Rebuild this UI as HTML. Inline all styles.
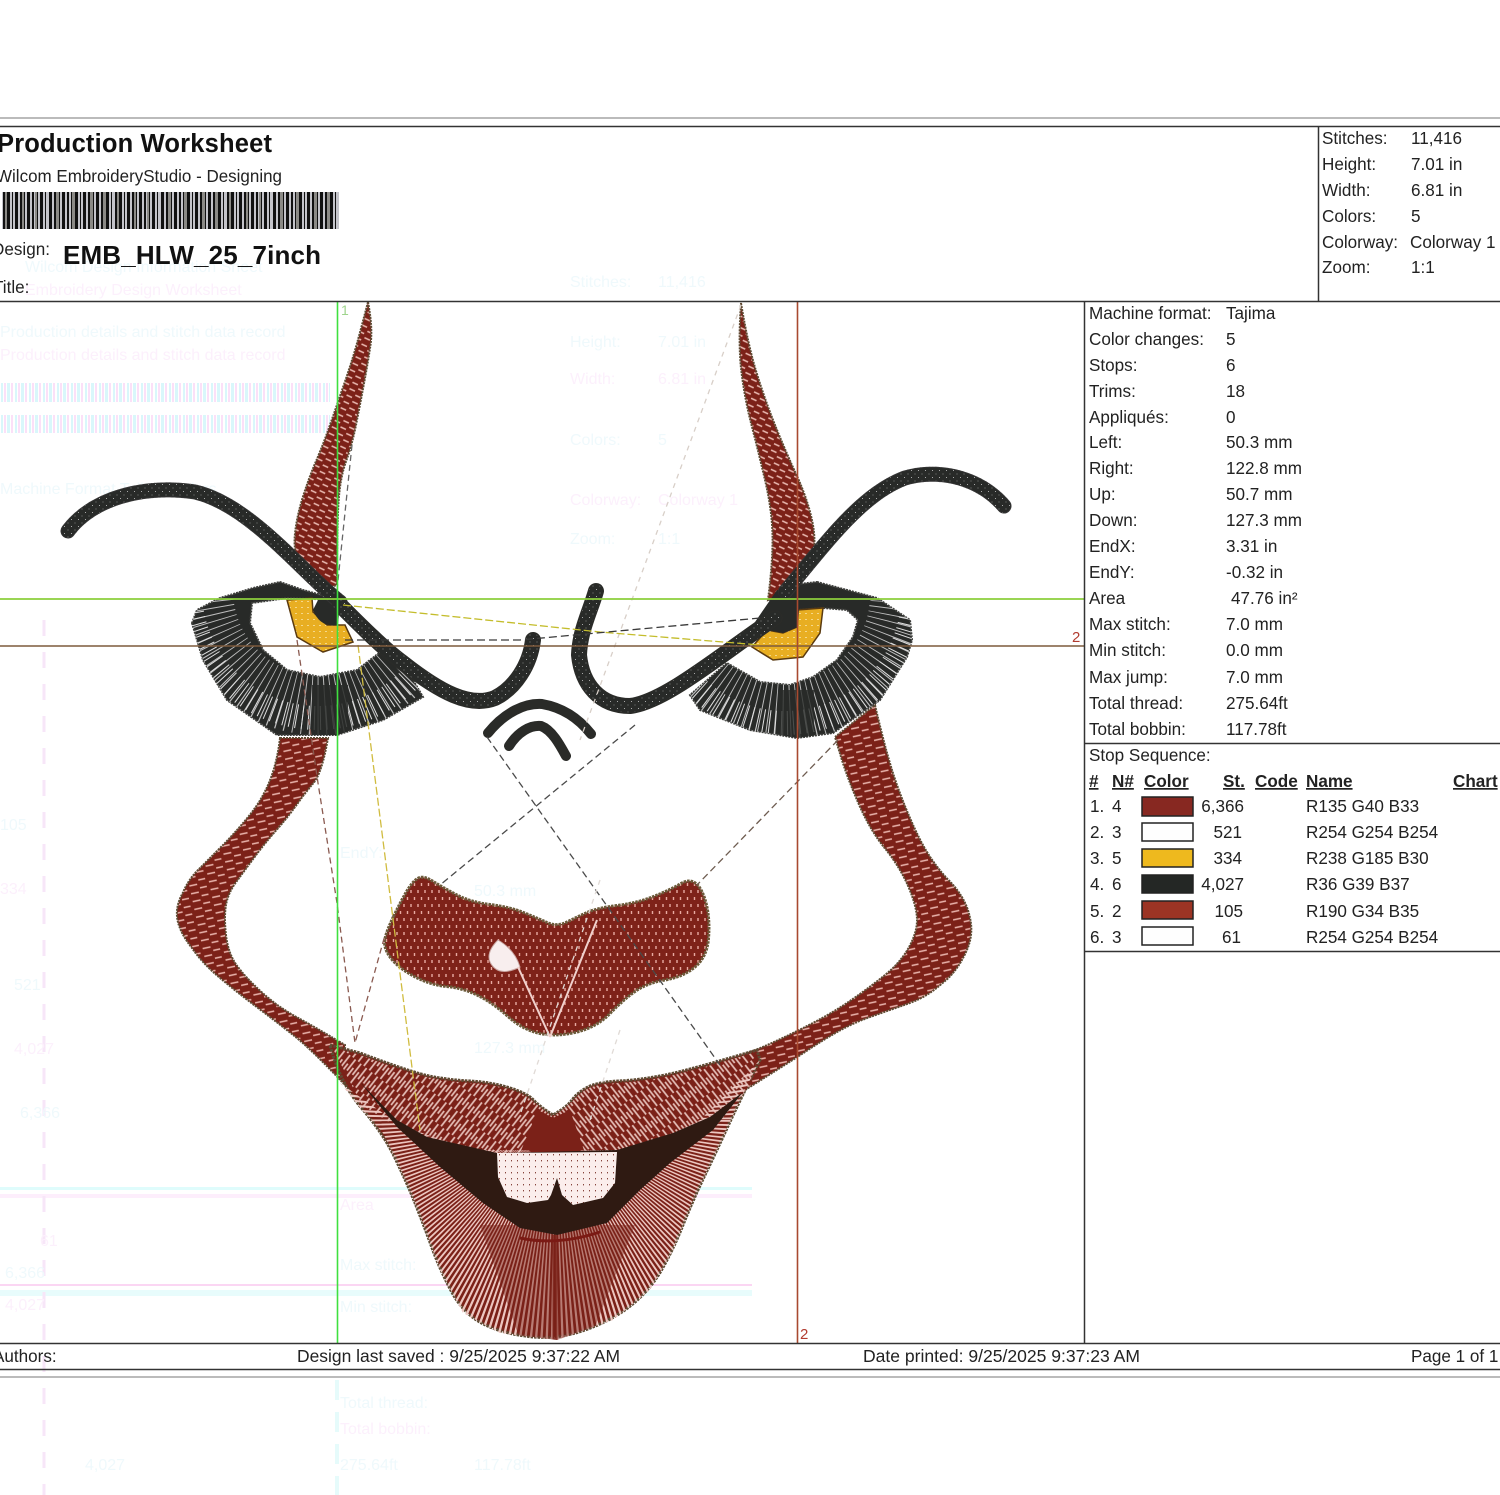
<!DOCTYPE html>
<html lang="en"><head><meta charset="utf-8"><title>Production Worksheet</title>
<style>
html,body{margin:0;padding:0;background:#fff;width:1500px;height:1495px;overflow:hidden}
svg{display:block}
text{font-family:"Liberation Sans",sans-serif;fill:#222}
.t{font-size:17.1px}
.b{font-size:17.1px;font-weight:bold;text-decoration:underline}
.g{font-size:16px;fill:#eff9fc}
.p{font-size:16px;fill:#fcf0fc}
</style></head><body>
<svg width="1500" height="1495" viewBox="0 0 1500 1495" xmlns="http://www.w3.org/2000/svg">
<defs>
<pattern id="bar" patternUnits="userSpaceOnUse" width="112" height="40" x="2" y="190">
<rect width="112" height="40" fill="#c4c4ca"/>
<path d="M1 0h2v40h-2zM5 0h3v40h-3zM10 0h1v40h-1zM13 0h3v40h-3zM18 0h2v40h-2zM22 0h1v40h-1zM25 0h3v40h-3zM30 0h2v40h-2zM35 0h1v40h-1zM38 0h3v40h-3zM43 0h1v40h-1zM47 0h3v40h-3zM52 0h2v40h-2zM57 0h1v40h-1zM60 0h3v40h-3zM65 0h2v40h-2zM69 0h1v40h-1zM73 0h3v40h-3zM78 0h1v40h-1zM81 0h3v40h-3zM86 0h2v40h-2zM91 0h1v40h-1zM94 0h3v40h-3zM99 0h2v40h-2zM104 0h3v40h-3zM109 0h1v40h-1z" fill="#111"/>
<path d="M3 0h2v40h-2zM20 0h2v40h-2zM33 0h2v40h-2zM54 0h3v40h-3zM70 0h3v40h-3zM88 0h3v40h-3zM101 0h3v40h-3z" fill="#8b8a86"/>
</pattern>
<pattern id="ghostbar" patternUnits="userSpaceOnUse" width="14" height="20">
<rect width="14" height="20" fill="#fff"/>
<path d="M1 0h2v20h-2zM7 0h3v20h-3z" fill="#d9f7fb"/>
<path d="M4 0h2v20h-2zM11 0h2v20h-2z" fill="#fbe0f8"/>
</pattern>
<pattern id="red" patternUnits="userSpaceOnUse" width="20" height="8" patternTransform="rotate(-12)">
<rect width="20" height="8" fill="#7c2118"/>
<path d="M1 2h8M11 6h7" stroke="#eab5ad" stroke-width="1.4"/>
</pattern>
<pattern id="redt" patternUnits="userSpaceOnUse" width="16" height="7" patternTransform="rotate(25)">
<rect width="16" height="7" fill="#7c2118"/>
<path d="M1 1.500h6M9 5h6" stroke="#ecbcb4" stroke-width="1.5"/>
</pattern>
<pattern id="nose" patternUnits="userSpaceOnUse" width="7" height="14">
<rect width="7" height="14" fill="#7e2219"/>
<path d="M1.5 1v3M5 8v3" stroke="#e8aaa2" stroke-width="1.4"/>
</pattern>
<pattern id="lipL" patternUnits="userSpaceOnUse" width="7" height="22" patternTransform="rotate(38)">
<rect width="7" height="22" fill="#7b2118"/>
<path d="M1.500 0v14M5 8v14" stroke="#e6c0b9" stroke-width="1.7"/>
</pattern>
<pattern id="lipR" patternUnits="userSpaceOnUse" width="7" height="22" patternTransform="rotate(-38)">
<rect width="7" height="22" fill="#7b2118"/>
<path d="M1.500 0v14M5 8v14" stroke="#e6c0b9" stroke-width="1.7"/>
</pattern>
<pattern id="dots" patternUnits="userSpaceOnUse" width="7" height="7">
<rect width="7" height="7" fill="#282a28"/>
<rect x="1" y="1" width="1" height="1" fill="#a9a9a9"/>
<rect x="4.5" y="4.5" width="1" height="1" fill="#808080"/>
</pattern>
<pattern id="yel" patternUnits="userSpaceOnUse" width="6" height="6">
<rect width="6" height="6" fill="#e8ae22"/>
<rect x="1" y="1" width="2" height="1" fill="#f5d88a"/>
</pattern>
<pattern id="tooth" patternUnits="userSpaceOnUse" width="6" height="6">
<rect width="6" height="6" fill="#fbeeec"/>
<rect x="1" y="2" width="1" height="1.4" fill="#87453d"/>
</pattern>
<clipPath id="cLowerLip"><path d="M340 1083L362 1110L383 1133L407 1183L423 1223L440 1270L463 1313L500 1333L557 1340L613 1320L650 1290L673 1250L693 1200L717 1150L740 1100L760 1060L700 1120L640 1150L555 1150L470 1150L400 1125Z"/></clipPath>
<clipPath id="cEyeL"><path d="M192 623L203 660L227 700L277 735L337 735L383 720L423 697L403 663L383 650L357 670L320 677L287 670L263 650L250 623L252 603L253 588L220 598L197 610Z"/></clipPath>
<clipPath id="cEyeR"><path d="M910 620L912 640L907 657L880 700L833 733L797 738L750 730L700 710L690 695L727 663L760 682L790 685L813 677L837 660L853 637L858 620L847 610L877 598Z"/></clipPath>
</defs>
<rect width="1500" height="1495" fill="#fff"/>

<!-- ghost artefacts -->
<g>
<rect x="0" y="383" width="330" height="19" fill="url(#ghostbar)"/><rect x="0" y="415" width="330" height="18" fill="url(#ghostbar)"/>
<rect x="0" y="1187" width="752" height="3" fill="#dffcfc"/><rect x="0" y="1194" width="752" height="4" fill="#fdeefc"/>
<rect x="0" y="1284" width="752" height="2" fill="#fbd6f3"/><rect x="0" y="1290" width="752" height="6" fill="#e8fcfc"/>
<path d="M44 620V1495" stroke="#f7e6f8" stroke-width="3" stroke-dasharray="16 16"/>
<path d="M337 1380V1495" stroke="#e6fbfb" stroke-width="4" stroke-dasharray="20 12"/>
<text class="g" x="25" y="272">Wilcom Design Information Sheet</text>
<text class="p" x="25" y="295">Embroidery Design Worksheet</text>
<text class="g" x="0" y="337">Production details and stitch data record</text>
<text class="p" x="0" y="360">Production details and stitch data record</text>
<text class="g" x="0" y="494">Machine   Format   Tajima   Colors</text>
<text class="g" x="570" y="287">Stitches:</text><text class="g" x="658" y="287">11,416</text>
<text class="g" x="570" y="347">Height:</text><text class="g" x="658" y="347">7.01 in</text>
<text class="p" x="570" y="384">Width:</text><text class="p" x="658" y="384">6.81 in</text>
<text class="g" x="570" y="445">Colors:</text><text class="g" x="658" y="445">5</text>
<text class="p" x="570" y="505">Colorway:</text><text class="p" x="658" y="505">Colorway 1</text>
<text class="g" x="570" y="544">Zoom:</text><text class="g" x="658" y="544">1:1</text>
<text class="g" x="474" y="896">50.3 mm</text><text class="g" x="474" y="1053">127.3 mm</text>
<text class="g" x="340" y="858">EndY:</text><text class="p" x="340" y="1210">Area</text>
<text class="g" x="340" y="1270">Max stitch:</text><text class="g" x="340" y="1312">Min stitch:</text>
<text class="g" x="340" y="1408">Total thread:</text><text class="p" x="340" y="1434">Total bobbin:</text>
<text class="g" x="340" y="1470">275.64ft</text><text class="g" x="474" y="1470">117.78ft</text>
<text class="g" x="0" y="830">105</text><text class="p" x="0" y="894">334</text><text class="g" x="14" y="990">521</text>
<text class="p" x="14" y="1054">4,027</text><text class="g" x="20" y="1118">6,366</text><text class="p" x="40" y="1246">61</text>
<text class="g" x="5" y="1278">6,366</text><text class="p" x="5" y="1310">4,027</text>
<text class="g" x="85" y="1470">4,027</text>
</g>

<!-- jaws -->
<path d="M280 738Q277 763 269.500 781.500Q262 800 248.500 816.500Q235 833 221.500 846.500Q208 860 198 870Q188 880 182.500 893.500Q175 907 177.500 920Q180 933 192 948Q202 963 220 978Q238 993 258 1008Q278 1023 295 1036.500Q312 1050 345 1085L345 1045Q315 1027 296.500 1017Q278 1007 261.500 992Q245 977 236.500 965Q228 953 226 935Q224 917 226 905Q228 893 236.500 881.500Q245 870 255 856.500Q265 843 276.500 830Q288 817 296.500 805Q305 793 313.500 783Q322 773 328 738Z" fill="url(#red)" stroke="#5e4a33" stroke-width="2" stroke-dasharray="2 1"/>
<path d="M875 705Q887 757 897 785Q907 813 918.500 836.500Q930 860 947 878.500Q966 897 970 918Q974 935 966 952Q957 972 942 983.500Q927 997 908.500 1003.500Q890 1010 871.500 1016.500Q853 1023 838 1031.500Q823 1040 808 1050Q793 1060 745 1090L720 1063Q750 1053 775 1041.500Q800 1030 818.500 1020Q837 1010 853.500 998.500Q870 987 885 975Q900 963 908.500 948Q917 933 917 920Q917 907 908.500 887Q900 867 885 848.500Q870 830 858.500 803.500Q847 777 841 757Q835 737 835 737Z" fill="url(#red)" stroke="#5e4a33" stroke-width="2" stroke-dasharray="2 1"/>

<!-- horns -->
<path d="M368 302Q373 328 370.500 345Q368 362 364 383.500Q360 405 356 425Q352 445 346 461.500Q340 478 338.500 503Q337 528 337 585L327 588Q307 575 300 563.500Q293 552 295 533.500Q297 515 303.500 495Q310 475 316.500 460Q323 445 330.500 423.500Q338 402 345.500 380Q353 358 357.500 341.500Q362 325 368 302Z" fill="url(#redt)" stroke="#5e4a33" stroke-width="2" stroke-dasharray="2 1"/>
<path d="M741 303Q748 345 756.500 372.500Q765 400 775 425Q785 450 796.500 475Q808 500 812.500 522.500Q817 545 811 560Q805 575 790 590L768 600Q773 560 772.500 535Q772 510 765 480Q758 450 751.500 425Q745 400 741.500 372.500Q738 345 741 303Z" fill="url(#redt)" stroke="#5e4a33" stroke-width="2" stroke-dasharray="2 1"/>

<!-- nose -->
<path d="M393.500 916.500Q400 903 406 892.500Q412 882 417.500 878.500Q423 875 432.500 881Q442 887 456 894.500Q470 902 490 904.500Q510 907 523.500 912.500Q537 918 547 922.500Q557 927 567 922Q577 917 587 912.500Q597 908 617 905.500Q637 903 653.500 896.500Q670 890 680 884Q690 878 696.500 884Q703 890 706.500 905Q710 920 708.500 938.500Q707 957 695 967Q683 977 665 980Q647 983 635 991.500Q623 1000 610 1013.500Q597 1027 577 1032Q557 1037 540 1033.500Q523 1030 508 1016.500Q493 1003 478 995.500Q463 988 446.500 986.500Q430 985 413.500 976Q397 967 390 957Q383 947 385 938.500Q387 930 393.500 916.500Z" fill="url(#nose)" stroke="#6b5a3a" stroke-width="3" stroke-dasharray="2.5 1"/>
<path d="M498 940Q486 952 490 962Q498 978 520 967Q515 950 498 940Z" fill="#f8eeee" stroke="#c9a6a2"/>
<path d="M550 1037L597 920M550 1037L518 967" stroke="#f0d0cc" stroke-width="2" fill="none"/>

<!-- mouth -->
<path d="M330 1045L360 1053Q413 1073 431.500 1076.500Q450 1080 470 1081Q490 1082 508.500 1087.500Q527 1093 533.500 1100Q540 1107 553 1115Q567 1107 572 1100Q577 1093 587 1087.500Q597 1082 618.500 1081Q640 1080 665 1075Q690 1070 757 1050L760 1060Q740 1100 728.500 1125Q717 1150 705 1175Q693 1200 683 1225Q673 1250 661.500 1270Q650 1290 631.500 1305Q613 1320 585 1330Q557 1340 528.500 1336.500Q500 1333 481.500 1323Q463 1313 451.500 1291.500Q440 1270 431.500 1246.500Q423 1223 415 1203Q407 1183 395 1158Q383 1133 361.500 1108Q340 1083 330 1045Z" fill="#7b2118" stroke="#5e4a33" stroke-width="3" stroke-dasharray="2.5 1"/>
<path d="M332 1047L360 1055Q413 1075 431.500 1078Q450 1082 470 1083Q490 1084 508.500 1089Q527 1095 533.500 1102L553 1117V1160L497 1153L427 1137L397 1127L362 1105Z" fill="url(#lipL)"/>
<path d="M553 1117L572 1102Q577 1095 587 1089Q597 1084 618.500 1083Q640 1082 665 1077Q690 1072 756 1052L750 1085L717 1125L673 1140L617 1150L553 1160Z" fill="url(#lipR)"/>
<path d="M538 1110L553 1118L570 1110L585 1153L520 1153Z" fill="#7b2118"/>
<g clip-path="url(#cLowerLip)">
<circle cx="555" cy="1120" r="140" fill="none" stroke="#ecc6c0" stroke-width="200" stroke-dasharray="1.5 1.9"/>
<path d="M480 1225L635 1225L590 1340L520 1340Z" fill="#7b2118" opacity=".45"/>
<path d="M555 1235V1340" stroke="#7b2118" stroke-width="5" opacity=".8"/>
</g>
<path d="M360 1082L397 1120L427 1137L497 1153L617 1150L673 1133L710 1117L743 1092L713 1130L670 1163L640 1190L607 1223L557 1235L520 1228L483 1203L440 1167L397 1127Z" fill="#2f1a12"/>
<path d="M520 1238Q557 1246 600 1232" stroke="#7b1a14" stroke-width="3" fill="none"/>
<path d="M497 1153L617 1152L615 1183L603 1198L573 1205L562 1195L557 1178L551 1195L548 1200L527 1203L507 1197L498 1177Z" fill="url(#tooth)"/>

<!-- eyes -->
<path d="M192 623L203 660L227 700L277 735L337 735L383 720L423 697L403 663L383 650L357 670L320 677L287 670L263 650L250 623L252 603L287 598L340 600L303 590L280 582L253 588L220 598L197 610Z" fill="#282a28" stroke="#3c3d3a" stroke-width="2" stroke-dasharray="2 1"/>
<g clip-path="url(#cEyeL)">
<circle cx="318" cy="590" r="115" fill="none" stroke="#bdbdbd" stroke-width="60" stroke-dasharray="1 6" stroke-dashoffset="2"/>
<circle cx="318" cy="590" r="128" fill="none" stroke="#e0e0e0" stroke-width="24" stroke-dasharray="1 5"/>
<rect x="312" y="685" width="36" height="50" fill="#282a28" opacity=".85"/>
</g>
<path d="M287 600L297 637L323 652L353 642L345 625L327 625L313 612L312 598Z" fill="url(#yel)" stroke="#5a3a10" stroke-width="1.5"/>
<path d="M313 610Q320 628 338 625L340 602L320 596Z" fill="#282a28"/>

<path d="M817 582L877 598L910 620L912 640L907 657L880 700L833 733L797 738L750 730L700 710L690 695L727 663L760 682L790 685L813 677L837 660L853 637L858 620L847 610L823 608L797 610L770 600L790 585Z" fill="#282a28" stroke="#3c3d3a" stroke-width="2" stroke-dasharray="2 1"/>
<g clip-path="url(#cEyeR)">
<circle cx="785" cy="595" r="115" fill="none" stroke="#bdbdbd" stroke-width="60" stroke-dasharray="1 6"/>
<circle cx="785" cy="595" r="128" fill="none" stroke="#e0e0e0" stroke-width="24" stroke-dasharray="1 5"/>
<rect x="780" y="690" width="34" height="48" fill="#282a28" opacity=".8"/>
</g>
<path d="M823 608L820 633L803 657L773 660L752 647L767 630L783 633L797 627L797 610Z" fill="url(#yel)" stroke="#5a3a10" stroke-width="1.5"/>
<path d="M753 625L777 590L800 592L798 627L783 633L767 630Z" fill="#282a28"/>

<!-- eyebrows / curves -->
<g fill="none" stroke-linecap="round" stroke-linejoin="round">
<path d="M68 531C95 495 150 485 195 492C250 505 300 570 340 602" stroke="#333" stroke-width="15" stroke-dasharray="2 1"/>
<path d="M68 531C95 495 150 485 195 492C250 505 300 570 340 602" stroke="url(#dots)" stroke-width="13"/>
<path d="M1004 506C980 478 940 468 905 478C860 495 825 545 785 592" stroke="#333" stroke-width="15" stroke-dasharray="2 1"/>
<path d="M1004 506C980 478 940 468 905 478C860 495 825 545 785 592" stroke="url(#dots)" stroke-width="13"/>
<path d="M340 605C360 625 385 650 403 663C440 692 470 708 495 698C515 688 530 665 533 640" stroke="#2a2b28" stroke-width="16"/>
<path d="M340 605C360 625 385 650 403 663C440 692 470 708 495 698C515 688 530 665 533 640" stroke="url(#dots)" stroke-width="13"/>
<path d="M596 591C590 612 580 630 579 655C582 685 600 706 630 706C665 702 720 655 775 618" stroke="#2a2b28" stroke-width="16"/>
<path d="M596 591C590 612 580 630 579 655C582 685 600 706 630 706C665 702 720 655 775 618" stroke="url(#dots)" stroke-width="13"/>
<path d="M488 733C505 712 525 703 542 704C565 708 580 720 591 734" stroke="#2a2b28" stroke-width="10"/>
<path d="M509 746C518 732 530 725 541 726C552 730 560 745 566 756" stroke="#2a2b28" stroke-width="10"/>
</g>

<!-- travel runs -->
<g fill="none" stroke-width="1.3">
<path d="M487 737L720 1065" stroke="#4a4a4a" stroke-dasharray="7 4"/>
<path d="M838 740L697 885" stroke="#6e5c50" stroke-dasharray="7 4"/>
<path d="M635 725L440 885" stroke="#4a4a4a" stroke-dasharray="7 4"/>
<path d="M741 305L580 740" stroke="#d8cfc8" stroke-dasharray="5 5"/>
<path d="M600 880L520 1115M620 1030L590 1120" stroke="#e0dad6" stroke-dasharray="5 5"/>
<path d="M343 605L600 632L760 645" stroke="#c4bd2c" stroke-dasharray="8 3"/>
<path d="M358 645L420 1130" stroke="#d0bc40" stroke-dasharray="8 3"/>
<path d="M297 640L318 783L337 903L355 1043L385 935" stroke="#8a5a50" stroke-dasharray="6 4"/>
<path d="M345 640L520 640L760 618" stroke="#3a3a3a" stroke-dasharray="8 4"/>
<path d="M352 445L337 590" stroke="#666" stroke-dasharray="6 4"/>
</g>

<!-- guides -->
<path d="M0 599H1084" stroke="#8ccf3c" stroke-width="1.8"/>
<path d="M0 646H1084" stroke="#7d5a3c" stroke-width="1.5"/>
<path d="M337.500 301V1343" stroke="#3fe03f" stroke-width="1.6"/>
<path d="M797.500 302V1343" stroke="#a84a30" stroke-width="1.6"/>
<text x="341" y="315" style="font-size:14px;fill:#9ed48c">1</text>
<text x="1072" y="642" style="font-size:15px;fill:#b23c30">2</text>
<text x="800" y="1339" style="font-size:15px;fill:#b23c30">2</text>

<!-- frame -->
<g stroke="#333" fill="none">
<path d="M0 118H1500" stroke="#777" stroke-width="1"/>
<path d="M0 126.500H1500" stroke-width="1.5"/>
<path d="M0 301.500H1500" stroke-width="1.5"/>
<path d="M1318.500 126V301" stroke-width="1.5"/>
<path d="M1084.500 301V1343" stroke-width="1.5"/>
<path d="M1084 743.500H1500" stroke-width="1.5"/>
<path d="M1084 951.500H1500" stroke-width="1.5"/>
<path d="M0 1343.500H1500" stroke-width="1.5"/>
<path d="M0 1369.500H1500" stroke-width="1.5"/>
<path d="M0 1377H1500" stroke="#777" stroke-width="1"/>
</g>

<!-- header -->
<text x="-3" y="152" textLength="275" lengthAdjust="spacing" style="font-size:25.5px;font-weight:bold;fill:#111">Production Worksheet</text>
<text x="-4" y="182" textLength="286" lengthAdjust="spacingAndGlyphs" class="t">Wilcom EmbroideryStudio - Designing</text>
<rect x="2" y="192" width="337" height="37" fill="url(#bar)"/>
<text x="-8" y="255" class="t">Design:</text>
<text x="63" y="264" textLength="258" lengthAdjust="spacing" style="font-size:26px;font-weight:bold;fill:#111">EMB_HLW_25_7inch</text>
<text x="-7" y="293" class="t">Title:</text>

<text class="t" x="1322" y="144">Stitches:</text><text class="t" x="1411" y="144">11,416</text>
<text class="t" x="1322" y="170">Height:</text><text class="t" x="1411" y="170">7.01 in</text>
<text class="t" x="1322" y="196">Width:</text><text class="t" x="1411" y="196">6.81 in</text>
<text class="t" x="1322" y="222">Colors:</text><text class="t" x="1411" y="222">5</text>
<text class="t" x="1322" y="248">Colorway:</text><text class="t" x="1410" y="248">Colorway 1</text>
<text class="t" x="1322" y="273">Zoom:</text><text class="t" x="1411" y="273">1:1</text>

<text class="t" x="1089" y="319">Machine format:</text><text class="t" x="1226" y="319">Tajima</text>
<text class="t" x="1089" y="345">Color changes:</text><text class="t" x="1226" y="345">5</text>
<text class="t" x="1089" y="371">Stops:</text><text class="t" x="1226" y="371">6</text>
<text class="t" x="1089" y="397">Trims:</text><text class="t" x="1226" y="397">18</text>
<text class="t" x="1089" y="423">Appliqués:</text><text class="t" x="1226" y="423">0</text>
<text class="t" x="1089" y="448">Left:</text><text class="t" x="1226" y="448">50.3 mm</text>
<text class="t" x="1089" y="474">Right:</text><text class="t" x="1226" y="474">122.8 mm</text>
<text class="t" x="1089" y="500">Up:</text><text class="t" x="1226" y="500">50.7 mm</text>
<text class="t" x="1089" y="526">Down:</text><text class="t" x="1226" y="526">127.3 mm</text>
<text class="t" x="1089" y="552">EndX:</text><text class="t" x="1226" y="552">3.31 in</text>
<text class="t" x="1089" y="578">EndY:</text><text class="t" x="1226" y="578">-0.32 in</text>
<text class="t" x="1089" y="604">Area</text><text class="t" x="1231" y="604">47.76 in²</text>
<text class="t" x="1089" y="630">Max stitch:</text><text class="t" x="1226" y="630">7.0 mm</text>
<text class="t" x="1089" y="656">Min stitch:</text><text class="t" x="1226" y="656">0.0 mm</text>
<text class="t" x="1089" y="683">Max jump:</text><text class="t" x="1226" y="683">7.0 mm</text>
<text class="t" x="1089" y="709">Total thread:</text><text class="t" x="1226" y="709">275.64ft</text>
<text class="t" x="1089" y="735">Total bobbin:</text><text class="t" x="1226" y="735">117.78ft</text>

<text class="t" x="1089" y="761">Stop Sequence:</text>
<text class="b" x="1089" y="787">#</text><text class="b" x="1112" y="787">N#</text><text class="b" x="1144" y="787">Color</text><text class="b" x="1223" y="787">St.</text><text class="b" x="1255" y="787">Code</text><text class="b" x="1306" y="787">Name</text><text class="b" x="1453" y="787">Chart</text>

<text class="t" x="1090" y="812">1.</text><text class="t" x="1112" y="812">4</text><text class="t" x="1244" y="812" text-anchor="end">6,366</text><text class="t" x="1306" y="812">R135 G40 B33</text>
<text class="t" x="1090" y="838">2.</text><text class="t" x="1112" y="838">3</text><text class="t" x="1242" y="838" text-anchor="end">521</text><text class="t" x="1306" y="838">R254 G254 B254</text>
<text class="t" x="1090" y="864">3.</text><text class="t" x="1112" y="864">5</text><text class="t" x="1242" y="864" text-anchor="end">334</text><text class="t" x="1306" y="864">R238 G185 B30</text>
<text class="t" x="1090" y="890">4.</text><text class="t" x="1112" y="890">6</text><text class="t" x="1244" y="890" text-anchor="end">4,027</text><text class="t" x="1306" y="890">R36 G39 B37</text>
<text class="t" x="1090" y="917">5.</text><text class="t" x="1112" y="917">2</text><text class="t" x="1243" y="917" text-anchor="end">105</text><text class="t" x="1306" y="917">R190 G34 B35</text>
<text class="t" x="1090" y="943">6.</text><text class="t" x="1112" y="943">3</text><text class="t" x="1241" y="943" text-anchor="end">61</text><text class="t" x="1306" y="943">R254 G254 B254</text>
<g stroke="#222" stroke-width="1.5">
<rect x="1142" y="797" width="51" height="19" fill="#872821"/>
<rect x="1142" y="823" width="51" height="18" fill="#fefefe"/>
<rect x="1142" y="849" width="51" height="18" fill="#eeb91e"/>
<rect x="1142" y="875" width="51" height="18" fill="#242725"/>
<rect x="1142" y="901" width="51" height="18" fill="#9c3424"/>
<rect x="1142" y="927" width="51" height="18" fill="#fefefe"/>
</g>

<!-- footer -->
<text class="t" x="-7" y="1362">Authors:</text>
<text class="t" x="297" y="1362" textLength="323" lengthAdjust="spacingAndGlyphs">Design last saved : 9/25/2025 9:37:22 AM</text>
<text class="t" x="863" y="1362" textLength="277" lengthAdjust="spacingAndGlyphs">Date printed: 9/25/2025 9:37:23 AM</text>
<text class="t" x="1411" y="1362">Page 1 of 1</text>
</svg>
</body></html>
